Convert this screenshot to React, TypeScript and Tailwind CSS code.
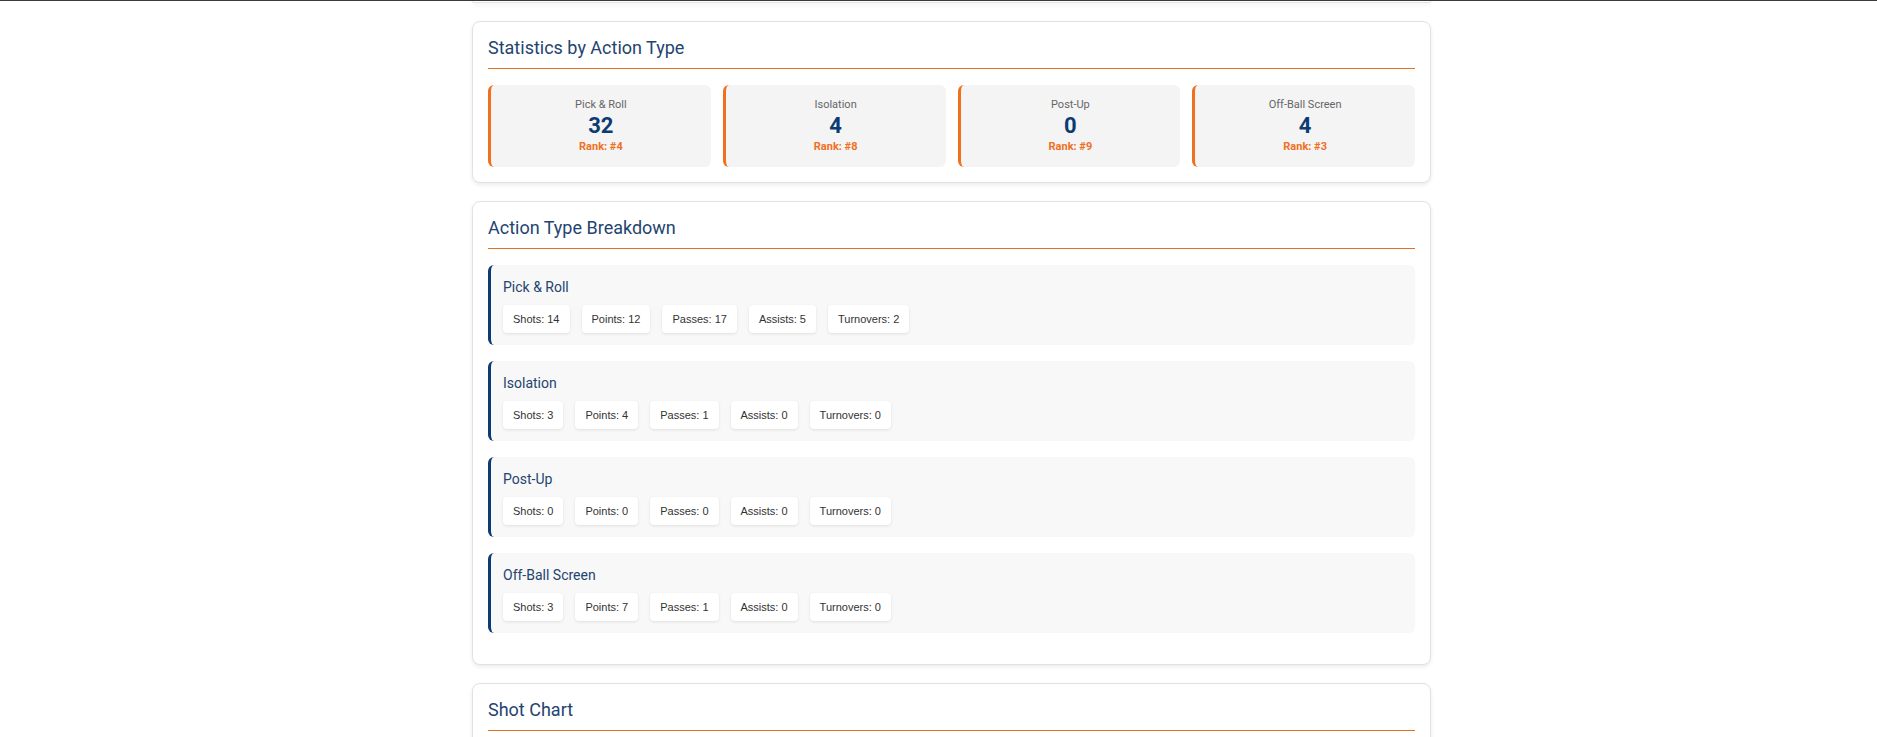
import React from "react";

type StatCard = { label: string; value: number; rank: number };
type Breakdown = { name: string; shots: number; points: number; passes: number; assists: number; turnovers: number };

const stats: StatCard[] = [
  { label: "Pick & Roll", value: 32, rank: 4 },
  { label: "Isolation", value: 4, rank: 8 },
  { label: "Post-Up", value: 0, rank: 9 },
  { label: "Off-Ball Screen", value: 4, rank: 3 },
];

const breakdown: Breakdown[] = [
  { name: "Pick & Roll", shots: 14, points: 12, passes: 17, assists: 5, turnovers: 2 },
  { name: "Isolation", shots: 3, points: 4, passes: 1, assists: 0, turnovers: 0 },
  { name: "Post-Up", shots: 0, points: 0, passes: 0, assists: 0, turnovers: 0 },
  { name: "Off-Ball Screen", shots: 3, points: 7, passes: 1, assists: 0, turnovers: 0 },
];

const FONT = "font-['Roboto','Liberation_Sans',sans-serif]";

function Card({ title, children }: { title: string; children?: React.ReactNode }) {
  return (
    <section className="w-[959px] rounded-lg border border-[#e2e2e2] bg-white px-[15px] pt-[15px] pb-[15px] shadow-[0_2px_4px_rgba(0,0,0,0.08)]">
      <h2 className="border-b border-[#e2711d] pb-[9px] text-[18px] leading-[22px] font-normal text-[#24446f]">{title}</h2>
      {children}
    </section>
  );
}

function Chip({ children }: { children: React.ReactNode }) {
  return (
    <span className="rounded bg-white px-[10px] py-[7px] text-[11px] leading-[14px] text-[#333] shadow-[0_1px_3px_rgba(0,0,0,0.1)] font-['Liberation_Sans',Arial,sans-serif]">
      {children}
    </span>
  );
}

export default function App() {
  return (
    <div className={`min-h-[737px] border-t border-[#3a3a3a] bg-white ${FONT}`}>
      <div className="ml-[472px] flex flex-col gap-[18px]">
        {/* tail of previous card */}
        <div className="h-[2px] w-[959px] rounded-b-lg border-x border-b border-[#e2e2e2] shadow-[0_2px_4px_rgba(0,0,0,0.08)]" />

        <Card title="Statistics by Action Type">
          <div className="mt-4 grid grid-cols-4 gap-3">
            {stats.map(s => (
              <div key={s.label} className="flex flex-col items-center rounded-md border-l-[3px] border-[#f0701e] bg-[#f4f4f4] py-3">
                <div className="text-[11px] leading-4 text-[#666]">{s.label}</div>
                <div className="text-[22px] leading-[26px] font-bold text-[#0c3b73]">{s.value}</div>
                <div className="text-[11px] leading-4 font-bold text-[#f0701e]">Rank: #{s.rank}</div>
              </div>
            ))}
          </div>
        </Card>

        <Card title="Action Type Breakdown">
          <div className="mt-4 flex flex-col gap-4 pb-4">
            {breakdown.map(b => (
              <div key={b.name} className="rounded-md border-l-[3px] border-[#0c3b73] bg-[#f8f8f8] px-3 py-3">
                <div className="text-[14px] leading-5 text-[#24446f]">{b.name}</div>
                <div className="mt-2 flex gap-3">
                  <Chip>Shots: {b.shots}</Chip>
                  <Chip>Points: {b.points}</Chip>
                  <Chip>Passes: {b.passes}</Chip>
                  <Chip>Assists: {b.assists}</Chip>
                  <Chip>Turnovers: {b.turnovers}</Chip>
                </div>
              </div>
            ))}
          </div>
        </Card>

        <Card title="Shot Chart">
          <div className="h-[300px]" />
        </Card>
      </div>
    </div>
  );
}
